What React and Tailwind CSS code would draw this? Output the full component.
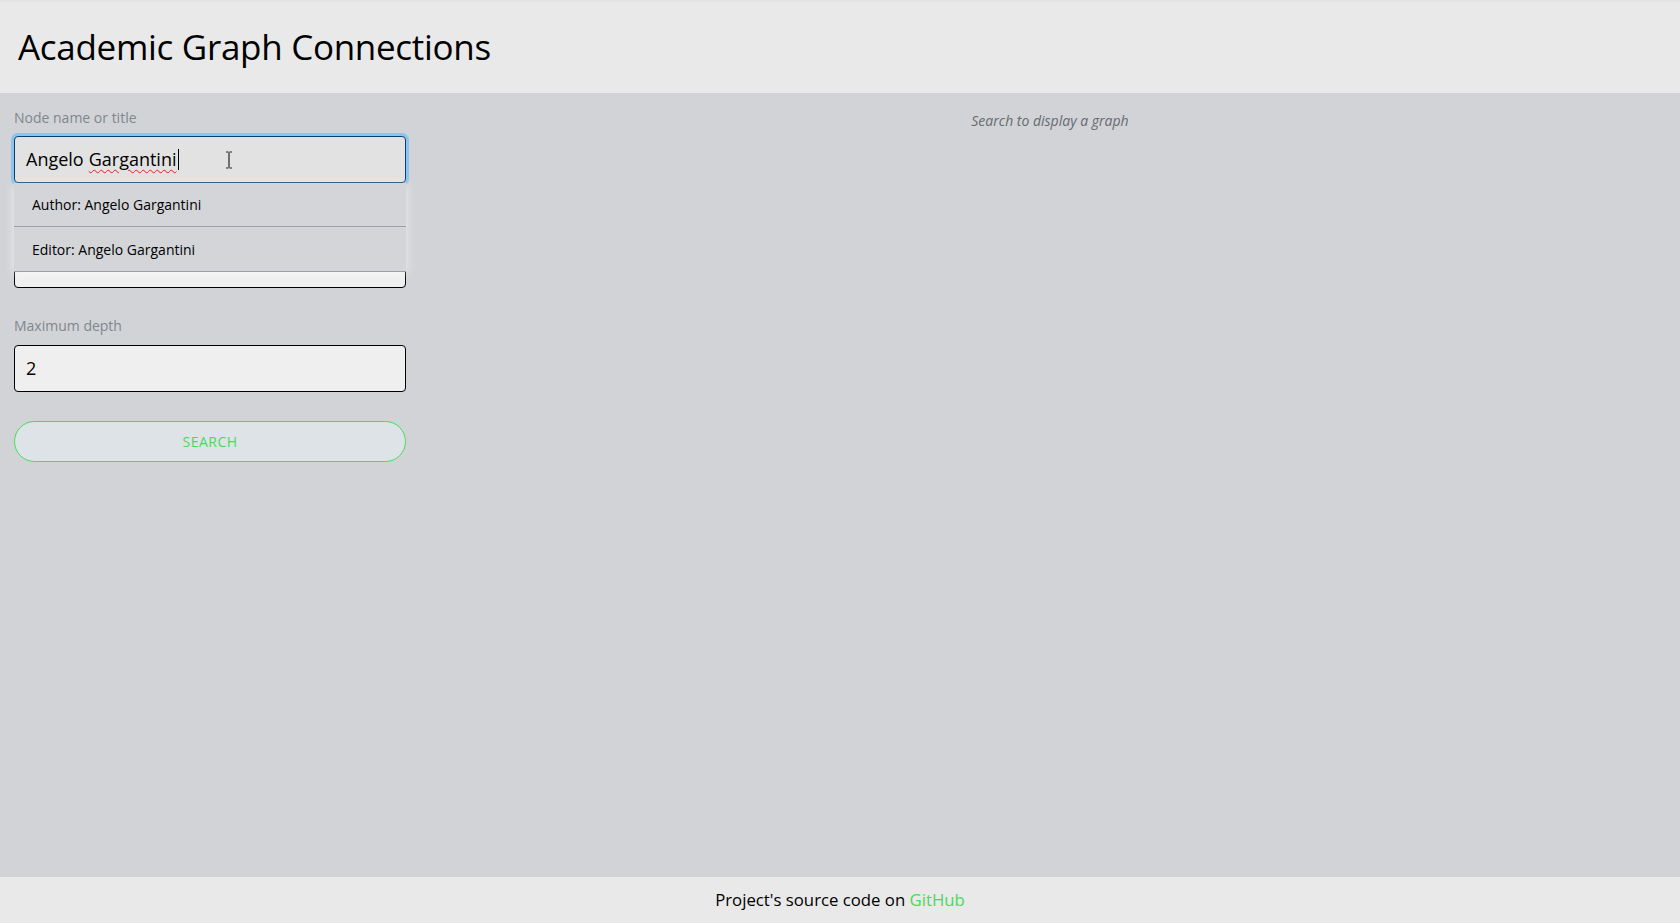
import React from "react";

export default function App() {
  const font = { fontFamily: '"Open Sans", "Noto Sans", sans-serif' };
  return (
    <div className="h-screen flex flex-col bg-[#d2d3d7] text-black" style={font}>
      <header className="h-[93px] shrink-0 bg-[#e9e9e9] flex items-center px-[18px] border-t-2 border-[#e4e4e4]">
        <h1 className="text-[35px] leading-none font-normal tracking-[-0.3px] pb-[2px]">Academic Graph Connections</h1>
      </header>
      <main className="flex-1 flex">
        <aside className="w-[420px] shrink-0 px-[14px] pt-[15px]">
          <div className="relative">
            <label className="block text-[14px] leading-[20px] text-[#7f888d] mb-[8px]">Node name or title</label>
            <div className="relative h-[47px] rounded-[4px] border border-[#0d3f6e] bg-[#e2e2e2] ring-[3px] ring-[#8cc4ee] flex items-center pl-[11px] text-[18px]">
              <span>Angelo</span>
              <span className="ml-[5px] underline decoration-wavy decoration-[#e02020] decoration-1 underline-offset-[3px]">Gargantini</span>
              <span className="w-px h-[21px] bg-black ml-px"></span>
              <svg className="absolute left-[210px] top-[14px]" width="8" height="18" viewBox="0 0 8 18">
                <path d="M1 1h2.5M4.5 1H7M4 1.5v15M1 17h2.5M4.5 17H7" stroke="#222" strokeWidth="1.2" fill="none" />
              </svg>
            </div>
            <div className="mt-[31px] mb-[7px] h-[20px]"></div>
            <div className="h-[47px] rounded-[4px] border border-black bg-[#efefef]"></div>
            <div className="absolute left-0 right-0 top-[75px] bg-[#d3d5d9] shadow-[0_2px_10px_rgba(255,255,255,0.6)] border-b border-[#9aa0a6]">
              <div className="h-[44px] flex items-center pl-[18px] text-[14px] border-b border-[#9aa0a6]">Author: Angelo Gargantini</div>
              <div className="h-[44px] flex items-center pl-[18px] text-[14px]">Editor: Angelo Gargantini</div>
            </div>
          </div>
          <label className="block mt-[28px] mb-[9px] text-[14px] leading-[20px] text-[#7f888d]">Maximum depth</label>
          <div className="h-[47px] rounded-[4px] border border-black bg-[#efefef] flex items-center pl-[11px] text-[18px]">2</div>
          <button className="mt-[29px] w-full h-[41px] rounded-full border border-[#44dd55] bg-[#dee3e7] text-[#44dd55] text-[14px] tracking-[0.5px]">SEARCH</button>
        </aside>
        <section className="flex-1 flex justify-center pt-[18px]">
          <p className="italic text-[14px] text-[#666a70] leading-[20px]">Search to display a graph</p>
        </section>
      </main>
      <footer className="h-[46px] shrink-0 bg-[#e9e9e9] flex items-center justify-center text-[16.75px]">
        <span>Project's source code on <a className="text-[#44dd55]" href="#">GitHub</a></span>
      </footer>
    </div>
  );
}
